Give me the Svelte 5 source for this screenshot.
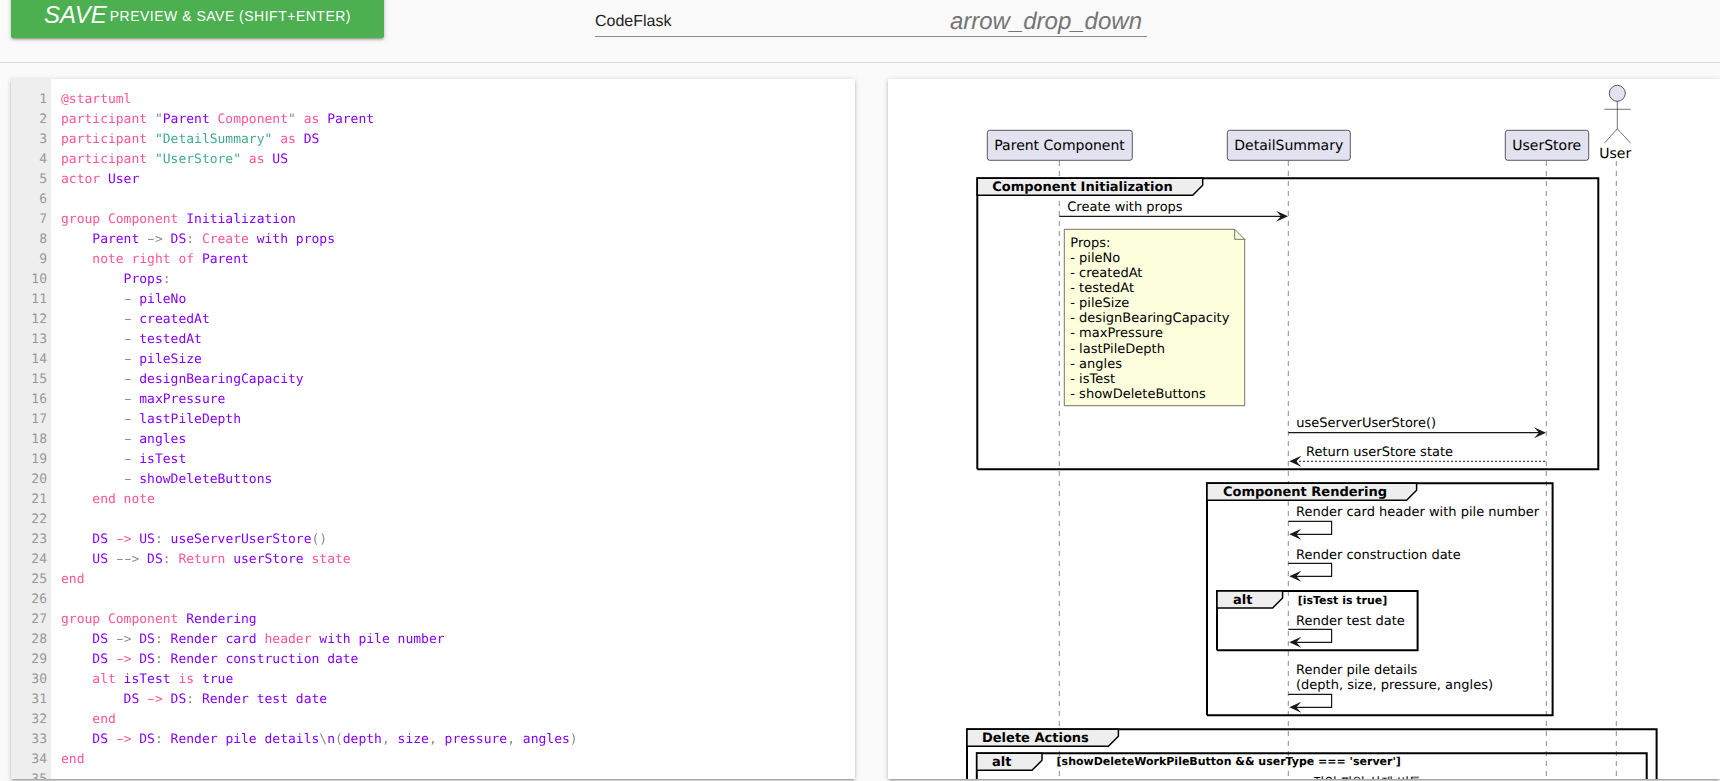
<script>
  const source = [
    '~@startuml~',
    '~participant~ ^"^Parent ~Component~^"^ ~as~ Parent',
    '~participant~ `"DetailSummary"` ~as~ DS',
    '~participant~ `"UserStore"` ~as~ US',
    '~actor~ User',
    '',
    '~group Component~ Initialization',
    '    Parent ^->^ DS^:^ ~Create~ with props',
    '    ~note right of~ Parent',
    '        Props^:^',
    '        ^-^ pileNo',
    '        ^-^ createdAt',
    '        ^-^ testedAt',
    '        ^-^ pileSize',
    '        ^-^ designBearingCapacity',
    '        ^-^ maxPressure',
    '        ^-^ lastPileDepth',
    '        ^-^ angles',
    '        ^-^ isTest',
    '        ^-^ showDeleteButtons',
    '    ~end note~',
    '',
    '    DS ~->~ US^:^ useServerUserStore^()^',
    '    US ^-->^ DS^:^ ~Return~ userStore ~state~',
    '~end~',
    '',
    '~group Component~ Rendering',
    '    DS ^->^ DS^:^ Render card ~header~ with pile number',
    '    DS ~->~ DS^:^ Render construction date',
    '    ~alt~ isTest ~is~ true',
    '        DS ~->~ DS^:^ Render test date',
    '    ~end~',
    '    DS ~->~ DS^:^ Render pile details^\\^n^(^depth^,^ size^,^ pressure^,^ angles^)^',
    '~end~',
    ''
  ];

  const kinds = { '~': 'op', '^': 'punct', '`': 'str' };

  function tokens(line) {
    const out = [];
    let kind = 'word';
    let text = '';
    const flush = () => {
      if (!text) return;
      // hyphens of the arrows and bullets are drawn wider, as in the editor's font
      if (kind === 'word' || kind === 'str') out.push({ kind, text });
      else for (const part of text.split(/(-)/)) {
        if (part === '-') out.push({ kind: kind + ' dash', text: part });
        else if (part) out.push({ kind, text: part });
      }
      text = '';
    };
    for (const ch of line) {
      if (kinds[ch]) {
        flush();
        kind = kind === kinds[ch] ? 'word' : kinds[ch];
      } else {
        text += ch;
      }
    }
    flush();
    return out;
  }

  const lines = source.map(tokens);

  const lifelines = [1059.3, 1288.3, 1546.3, 1616.3];

  const participants = [
    { x: 987.3, w: 145, label: 'Parent Component' },
    { x: 1227.3, w: 123, label: 'DetailSummary' },
    { x: 1505.3, w: 83.4, label: 'UserStore' }
  ];

  const noteLines = [
    'Props:',
    '- pileNo',
    '- createdAt',
    '- testedAt',
    '- pileSize',
    '- designBearingCapacity',
    '- maxPressure',
    '- lastPileDepth',
    '- angles',
    '- isTest',
    '- showDeleteButtons'
  ];

  const frames = [
    { x: 977.3, y: 178.3, r: 1598.3, b: 469.3, tab: 1202.7, title: 'Component Initialization', tx: 992.3 },
    { x: 1207, y: 483.3, r: 1552.6, b: 715.3, tab: 1416.6, title: 'Component Rendering', tx: 1223 },
    { x: 1217, y: 591, r: 1417.6, b: 650.3, tab: 1282.6, title: 'alt', tx: 1233 },
    { x: 967, y: 729.3, r: 1656.6, b: 800, tab: 1118.4, title: 'Delete Actions', tx: 982 },
    { x: 976.8, y: 753.3, r: 1646.7, b: 800, tab: 1042, title: 'alt', tx: 992 }
  ];

  const selfCalls = [
    { top: 521.3, labels: [{ y: 515.7, t: 'Render card header with pile number' }] },
    { top: 563.3, labels: [{ y: 558.7, t: 'Render construction date' }] },
    { top: 629.3, labels: [{ y: 624.7, t: 'Render test date' }] },
    {
      top: 694.3,
      labels: [
        { y: 673.7, t: 'Render pile details' },
        { y: 688.7, t: '(depth, size, pressure, angles)' }
      ]
    }
  ];

  const rightHead = (x, y) => `${x},${y} ${x - 12},${y - 5.5} ${x - 7},${y} ${x - 12},${y + 5.5}`;
  const leftHead = (x, y) => `${x},${y} ${x + 12},${y - 5.5} ${x + 7},${y} ${x + 12},${y + 5.5}`;
</script>

<div class="page">
  <header class="bar">
    <button class="save" type="button">
      <i class="save-icon">save</i>
      <span class="save-label">Preview &amp; Save (Shift+Enter)</span>
    </button>
    <div class="select">
      <span class="select-value">CodeFlask</span>
      <i class="select-arrow">arrow_drop_down</i>
    </div>
  </header>

  <main class="panes">
    <section class="card editor">
      <div class="gutter">
        {#each lines as _, i}
          <div class="num">{i + 1}</div>
        {/each}
      </div>
      <pre class="code">{#each lines as line}<div class="line">{#each line as tok}<span class={tok.kind}>{tok.text}</span>{/each}</div>{/each}</pre>
    </section>

    <section class="card preview">
      <svg class="diagram" width="832" height="700" viewBox="888 79 832 700" xmlns="http://www.w3.org/2000/svg">
        {#each lifelines as x}
          <line class="life" x1={x} y1="161" x2={x} y2="779" />
        {/each}

        {#each participants as p}
          <rect class="box" x={p.x} y="130.3" width={p.w} height="30" rx="2.5" />
          <text class="part" x={p.x + 7} y="150.3">{p.label}</text>
        {/each}

        <circle class="box" cx="1617.3" cy="93.3" r="8" />
        <path class="stick" d="M1617.3 101.3V128.7M1604.3 109.3H1630.7M1604.3 143.3L1617.3 128.7L1630.7 143.3" />
        <text class="part" x="1599.3" y="157.7">User</text>

        {#each frames as f}
          <path class="frame" d="M{f.x} {f.b}V{f.y}H{f.r}V{f.b}{f.b < 780 ? `H${f.x}` : ''}" />
          <path class="tab" d="M{f.x} {f.y}H{f.tab}V{f.y + 7}L{f.tab - 10} {f.y + 17}H{f.x}Z" />
          <text class="title" x={f.tx} y={f.y + 12.7}>{f.title}</text>
        {/each}
        <text class="cond" x="1297.7" y="603.7">[isTest is true]</text>
        <text class="cond" x="1056.6" y="765">[showDeleteWorkPileButton &amp;&amp; userType === 'server']</text>

        <text class="msg" x="1067.3" y="210.7">Create with props</text>
        <line class="arrow" x1="1059.3" y1="216.3" x2="1282" y2="216.3" />
        <polygon class="head" points={rightHead(1288, 216.3)} />

        <path class="note" d="M1064.3 229.3H1234.7L1244.7 239.3V405.7H1064.3Z" />
        <path class="fold" d="M1234.7 229.3V239.3H1244.7" />
        {#each noteLines as t, i}
          <text class="msg" x="1070.3" y={246.7 + i * 15.13}>{t}</text>
        {/each}

        <text class="msg" x="1296.3" y="427">useServerUserStore()</text>
        <line class="arrow" x1="1288.3" y1="432.7" x2="1540" y2="432.7" />
        <polygon class="head" points={rightHead(1546, 432.7)} />

        <text class="msg" x="1306" y="455.7">Return userStore state</text>
        <line class="arrow dashed" x1="1295" y1="461.3" x2="1546.3" y2="461.3" />
        <polygon class="head" points={leftHead(1289.3, 461.3)} />

        {#each selfCalls as c}
          {#each c.labels as l}
            <text class="msg" x="1296" y={l.y}>{l.t}</text>
          {/each}
          <path class="selfline" d="M1288.3 {c.top}H1331.6V{c.top + 13}H1295" />
          <polygon class="head" points={leftHead(1289.3, c.top + 13)} />
        {/each}

        <text class="msg" x="1313" y="787">작업 파일 삭제 버튼</text>
      </svg>
    </section>
  </main>
</div>

<style>
  :global(body) {
    margin: 0;
    background: #fafafa;
    overflow: hidden;
  }

  .page {
    height: 781px;
    display: flex;
    flex-direction: column;
    overflow: hidden;
    font-family: "Liberation Sans", Arial, sans-serif;
    text-rendering: geometricPrecision;
  }

  .bar {
    height: 63px;
    flex: none;
    box-sizing: border-box;
    border-bottom: 1px solid #dedede;
    padding-left: 11px;
    display: flex;
    align-items: flex-start;
    gap: 211px;
  }

  .save {
    width: 373px;
    height: 44px;
    margin-top: -6px;
    flex: none;
    border: 0;
    border-radius: 2px;
    background: #4caf50;
    color: #fff;
    display: flex;
    align-items: center;
    justify-content: center;
    gap: 3px;
    padding: 0;
    font-family: "Liberation Sans", Arial, sans-serif;
    font-size: 14px;
    text-transform: uppercase;
    box-shadow: 0 2px 2px 0 rgba(0, 0, 0, 0.14), 0 3px 1px -2px rgba(0, 0, 0, 0.12), 0 1px 5px 0 rgba(0, 0, 0, 0.2);
  }

  .save-label {
    letter-spacing: 0.5px;
  }

  .save-icon {
    font-size: 24px;
    font-style: italic;
    position: relative;
    top: -1px;
  }

  .select {
    width: 552px;
    height: 37px;
    flex: none;
    box-sizing: border-box;
    border-bottom: 1px solid #8a8a8a;
    display: flex;
    align-items: center;
    justify-content: space-between;
    padding: 7px 5px 0 0;
  }

  .select-value {
    font-size: 16px;
    color: #222;
  }

  .select-arrow {
    font-size: 24px;
    font-style: italic;
    color: #757575;
  }

  .panes {
    flex: 1;
    min-height: 0;
    display: flex;
    gap: 33px;
    padding: 16px 0 2px 11px;
    box-sizing: border-box;
  }

  .card {
    background: #fff;
    overflow: hidden;
    box-shadow: 0 2px 2px 0 rgba(0, 0, 0, 0.14), 0 3px 1px -2px rgba(0, 0, 0, 0.12), 0 1px 5px 0 rgba(0, 0, 0, 0.2);
  }

  .editor {
    width: 844px;
    flex: none;
    display: flex;
  }

  .preview {
    flex: 1;
    min-width: 0;
  }

  .gutter {
    width: 40px;
    flex: none;
    box-sizing: border-box;
    background: #eee;
    padding: 11px 4px 0 0;
    text-align: right;
    color: #999;
    font: 13px/20px "DejaVu Sans Mono", monospace;
  }

  .code {
    margin: 0;
    padding: 11px 10px 0;
    font: 13px/20px "DejaVu Sans Mono", monospace;
    will-change: transform;
  }

  .line {
    height: 20px;
    white-space: pre;
  }

  .word { color: #8500ff; }
  .op { color: #ff5598; }
  .punct { color: #8c8c8c; }
  .str { color: #41ad8f; }

  .dash {
    display: inline-block;
    transform: scaleX(1.7);
  }

  .diagram {
    display: block;
  }

  .diagram text {
    font-family: "DejaVu Sans", "Noto Sans CJK KR", sans-serif;
    fill: #000;
  }

  .life {
    stroke: #181818;
    stroke-width: 0.5;
    stroke-dasharray: 5 5;
  }

  .box {
    fill: #e2e2f0;
    stroke: #181818;
    stroke-width: 0.7;
  }

  .stick {
    fill: none;
    stroke: #181818;
    stroke-width: 0.6;
  }

  .part { font-size: 14px; }
  .msg { font-size: 13px; }
  .diagram .title { font-size: 13px; font-weight: 700; }
  .diagram .cond { font-size: 11px; font-weight: 700; }

  .frame {
    fill: none;
    stroke: #000;
    stroke-width: 2;
  }

  .tab {
    fill: #eee;
    stroke: #000;
    stroke-width: 1.5;
  }

  .arrow {
    stroke: #181818;
    stroke-width: 1.2;
  }

  .dashed {
    stroke-width: 1;
    stroke-dasharray: 2 2;
  }

  .selfline {
    fill: none;
    stroke: #181818;
    stroke-width: 1.2;
  }

  .head {
    fill: #181818;
  }

  .note {
    fill: #feffdd;
    stroke: #181818;
    stroke-width: 0.6;
  }

  .fold {
    fill: none;
    stroke: #181818;
    stroke-width: 0.6;
  }
</style>
